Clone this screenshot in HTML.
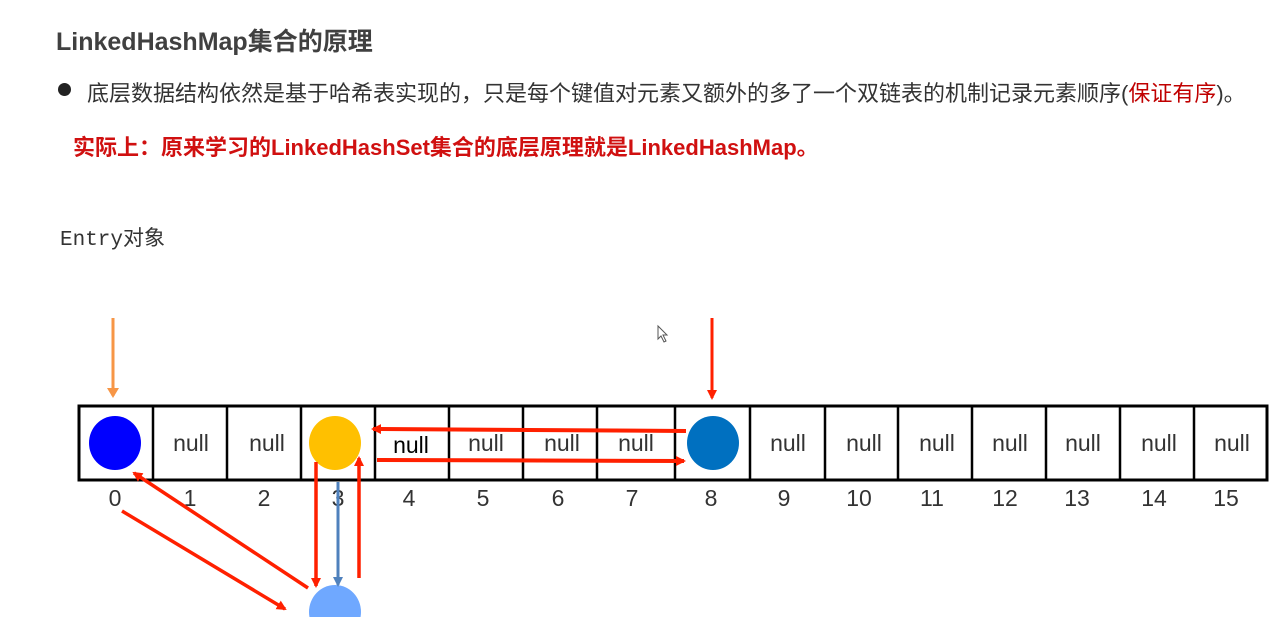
<!DOCTYPE html>
<html><head><meta charset="utf-8"><style>
body{margin:0;width:1282px;height:617px;background:#fff;overflow:hidden;position:relative;font-family:"Liberation Sans","Noto Sans CJK SC",sans-serif}
.t{position:absolute;white-space:nowrap}
</style></head><body>
<div class="t" style="left:56px;top:22px;font-size:25px;font-weight:bold;color:#404040">LinkedHashMap集合的原理</div>
<div class="t" style="left:58px;top:83px;width:13px;height:13px;border-radius:50%;background:#222"></div>
<div class="t" style="left:87px;top:76px;font-size:22px;color:#333">底层数据结构依然是基于哈希表实现的，只是每个键值对元素又额外的多了一个双链表的机制记录元素顺序(<span style="color:#c00000">保证有序</span>)。</div>
<div class="t" style="left:73px;top:130px;font-size:22px;font-weight:bold;color:#d01010">实际上：原来学习的LinkedHashSet集合的底层原理就是LinkedHashMap。</div>
<div class="t" style="left:60px;top:222px;font-size:21px;color:#333;font-family:'Liberation Mono','Noto Sans CJK SC',monospace">Entry对象</div>
<svg width="1282" height="617" style="position:absolute;left:0;top:0" font-family="Liberation Sans, sans-serif">
<defs>
<marker id="r" markerWidth="10" markerHeight="10" refX="8" refY="5" orient="auto" markerUnits="userSpaceOnUse"><path d="M0,0L10,5L0,10z" fill="#ff2000"/></marker>
<marker id="o" markerWidth="10" markerHeight="12" refX="8" refY="6" orient="auto" markerUnits="userSpaceOnUse"><path d="M0,0L10,6L0,12z" fill="#f79646"/></marker>
<marker id="b" markerWidth="10" markerHeight="10" refX="8" refY="5" orient="auto" markerUnits="userSpaceOnUse"><path d="M0,0L10,5L0,10z" fill="#4f81bd"/></marker>
</defs>
<rect x="79" y="406" width="1188" height="74" fill="none" stroke="#000" stroke-width="3"/>
<g stroke="#000" stroke-width="2.5">
<line x1="153" y1="406" x2="153" y2="480"/><line x1="227" y1="406" x2="227" y2="480"/><line x1="301" y1="406" x2="301" y2="480"/><line x1="375" y1="406" x2="375" y2="480"/><line x1="449" y1="406" x2="449" y2="480"/><line x1="523" y1="406" x2="523" y2="480"/><line x1="597" y1="406" x2="597" y2="480"/><line x1="675" y1="406" x2="675" y2="480"/><line x1="750" y1="406" x2="750" y2="480"/><line x1="825" y1="406" x2="825" y2="480"/><line x1="898" y1="406" x2="898" y2="480"/><line x1="972" y1="406" x2="972" y2="480"/><line x1="1046" y1="406" x2="1046" y2="480"/><line x1="1120" y1="406" x2="1120" y2="480"/><line x1="1194" y1="406" x2="1194" y2="480"/>
</g>
<g font-size="23" fill="#333" text-anchor="middle">
<text x="191" y="451">null</text><text x="267" y="451">null</text><text x="411" y="453" fill="#000">null</text><text x="486" y="451">null</text><text x="562" y="451">null</text><text x="636" y="451">null</text>
<text x="788" y="451">null</text><text x="864" y="451">null</text><text x="937" y="451">null</text><text x="1010" y="451">null</text><text x="1083" y="451">null</text><text x="1159" y="451">null</text><text x="1232" y="451">null</text>
</g>
<g font-size="23" fill="#333" text-anchor="middle">
<text x="115" y="506">0</text><text x="190" y="506">1</text><text x="264" y="506">2</text><text x="338" y="506">3</text><text x="409" y="506">4</text><text x="483" y="506">5</text><text x="558" y="506">6</text><text x="632" y="506">7</text><text x="711" y="506">8</text><text x="784" y="506">9</text><text x="859" y="506">10</text><text x="932" y="506">11</text><text x="1005" y="506">12</text><text x="1077" y="506">13</text><text x="1154" y="506">14</text><text x="1226" y="506">15</text>
</g>
<ellipse cx="115" cy="443" rx="26" ry="27" fill="#0000ff"/>
<ellipse cx="335" cy="443" rx="26" ry="27" fill="#ffc000"/>
<ellipse cx="713" cy="443" rx="26" ry="27" fill="#0070c0"/>
<ellipse cx="335" cy="612" rx="26" ry="27" fill="#6fa8ff"/>
<line x1="113" y1="318" x2="113" y2="396" stroke="#f79646" stroke-width="3" marker-end="url(#o)"/>
<line x1="712" y1="318" x2="712" y2="398" stroke="#ff2000" stroke-width="3" marker-end="url(#r)"/>
<line x1="686" y1="431" x2="373" y2="429" stroke="#ff2000" stroke-width="4" marker-end="url(#r)"/>
<line x1="377" y1="460" x2="684" y2="461" stroke="#ff2000" stroke-width="4" marker-end="url(#r)"/>
<line x1="316" y1="462" x2="316" y2="586" stroke="#ff2000" stroke-width="3.5" marker-end="url(#r)"/>
<line x1="359" y1="578" x2="359" y2="458" stroke="#ff2000" stroke-width="3.5" marker-end="url(#r)"/>
<line x1="338" y1="482" x2="338" y2="585" stroke="#4f81bd" stroke-width="3" marker-end="url(#b)"/>
<line x1="308" y1="588" x2="134" y2="473" stroke="#ff2000" stroke-width="3.5" marker-end="url(#r)"/>
<line x1="122" y1="511" x2="285" y2="609" stroke="#ff2000" stroke-width="3.5" marker-end="url(#r)"/>
<path d="M658,326 L658,339 L661,336 L664,342 L666,341 L663,335 L667,335 Z" fill="#fff" stroke="#555" stroke-width="1"/>
</svg>
</body></html>
